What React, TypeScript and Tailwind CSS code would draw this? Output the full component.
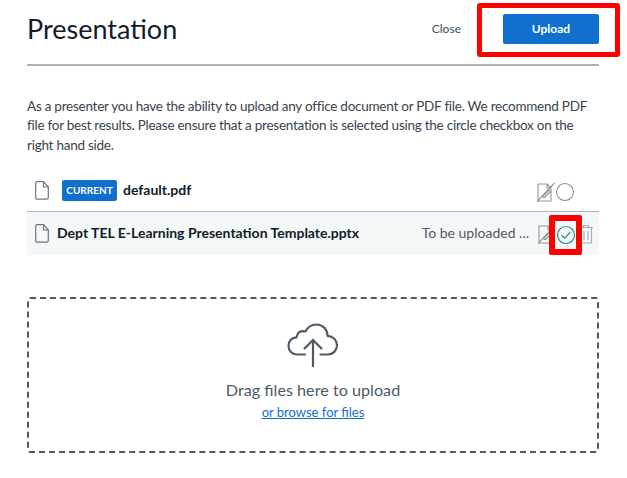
const FileIcon = () => (
  <svg width="14" height="19" viewBox="0 0 14 19" fill="none" stroke="#6b7680" strokeWidth="1.2" strokeLinejoin="round">
    <path d="M2 .7h6.500l4.800 5.300v10.500a1.700 1.700 0 0 1-1.700 1.700H2A1.300 1.300 0 0 1 .7 16.900V2A1.300 1.300 0 0 1 2 .7z" />
    <path d="M8.500 .7V6h4.800" />
  </svg>
);

const NoEditIcon = () => (
  <svg width="18" height="20" viewBox="0 0 18 20" fill="none" stroke="#8b959e" strokeWidth="1.1" strokeLinejoin="round">
    <path d="M1 2h9l4 4v13H1z" />
    <path d="M10 2v4h4" />
    <path d="M0 19.5 17.5 1" />
    <path d="M6 14l6-6 1.5 1.5-6 6H6z" />
  </svg>
);

const EmptyCircle = () => (
  <svg width="20" height="20" viewBox="0 0 20 20" fill="none" stroke="#8b959e" strokeWidth="1.1">
    <circle cx="10" cy="10" r="8.5" />
  </svg>
);

const CheckedCircle = () => (
  <svg width="20" height="20" viewBox="0 0 20 20" fill="none" stroke="#2f8f83" strokeWidth="1.2" strokeLinecap="round" strokeLinejoin="round">
    <circle cx="10" cy="10" r="8.5" />
    <path d="M6 10.5l2.8 2.7L14 7.5" />
  </svg>
);

const TrashIcon = () => (
  <svg width="14" height="20" viewBox="0 0 14 20" fill="none" stroke="#a2abb3" strokeWidth="1.1">
    <path d="M0 3.5h14" />
    <path d="M4.5 3.5V1.5h5v2" />
    <path d="M1.5 3.5V18a1 1 0 0 0 1 1h9a1 1 0 0 0 1-1V3.5" />
    <path d="M5 7v9M9 7v9" />
  </svg>
);

const CloudUpload = () => (
  <svg width="52" height="44" viewBox="0 0 52 44" fill="none" stroke="#4e5a66" strokeWidth="2.2" strokeLinecap="round" strokeLinejoin="round">
    <path d="M18 31.5H10.5C5 31.5 1.5 27.500 1.500 22.800 1.500 18 5 14.500 9.500 14.300 10 9.500 14 7 18.500 8.500 21 3.500 25 1.500 29.500 1.500 36 1.500 40.500 6.500 40.500 12.800 46 13.200 50 17 50 22.300 50 27.500 46 31.500 40.500 31.500H33.500" />
    <path d="M26 43V17" />
    <path d="M17.500 25.500 26 17l8.500 8.500" />
  </svg>
);

export default function App() {
  return (
    <div className="relative w-[627px] h-[478px] overflow-hidden bg-white pl-[27px] pr-[28px] font-['Lato',sans-serif] text-[#1c2733]">
      {/* header */}
      <div className="flex items-center h-[66px] border-b-2 border-[#a7b3bc] pb-[6px]">
        <h1 className="text-[27px] text-[#0f1c2b] flex-1 leading-none -mt-[2px]">Presentation</h1>
        <span className="text-[12px] font-medium text-[#4e5a66] mr-[42px]">Close</span>
        <button className="w-[96px] h-[30px] rounded-[2px] bg-[#1170cf] text-white text-[12px] font-bold">Upload</button>
      </div>

      <p className="mt-[30.500px] text-[13.500px] tracking-[-0.25px] leading-[19.500px] text-[#38434e] w-[572px]">
        As a presenter you have the ability to upload any office document or PDF file. We recommend PDF file for best results. Please ensure that a presentation is selected using the circle checkbox on the right hand side.
      </p>

      {/* file list */}
      <div className="mt-[17px] flex items-center h-[40px] border-b border-[#a7b3bc] pl-[8px] pr-[24px]">
        <span className="flex -mt-[3px]"><FileIcon /></span>
        <span className="ml-[13px] w-[55px] -mt-[3px] justify-center h-[21px] flex items-center rounded-[2px] bg-[#1170cf] text-white text-[10px] font-bold">CURRENT</span>
        <span className="ml-[6px] -mt-[5px] text-[14px] font-bold text-[#0f1c2b] flex-1">default.pdf</span>
        <NoEditIcon />
        <EmptyCircle />
      </div>
      <div className="flex items-center h-[43px] bg-[#f4f8f9] pl-[8px] pr-[6px]">
        <FileIcon />
        <span className="ml-[8px] -mt-[2px] text-[14px] font-bold text-[#0f1c2b] flex-1">Dept TEL E-Learning Presentation Template.pptx</span>
        <span className="text-[14px] -mt-[2px] text-[#4e5a66] mr-[9px]">To be uploaded ...</span>
        <NoEditIcon />
        <span className="flex mt-[3px]"><CheckedCircle /></span>
        <span className="ml-[3px] flex"><TrashIcon /></span>
      </div>

      {/* dropzone */}
      <div className="mt-[42px] h-[156px] border-2 border-dashed border-[#4e5a66] rounded-[3px] flex flex-col items-center pt-[24px]">
        <CloudUpload />
        <div className="mt-[13px] text-[16.200px] leading-[20px] text-[#4e5a66]">Drag files here to upload</div>
        <a className="mt-[3px] text-[13px] leading-[18px] text-[#1170cf] underline">or browse for files</a>
      </div>

      {/* red highlights */}
      <div className="absolute left-[477px] top-[3px] w-[143px] h-[54px] border-[5px] border-[#ff0000] rounded-[3px]" />
      <div className="absolute left-[549px] top-[215px] w-[33px] h-[40px] border-[6px] border-[#ff0000] rounded-[2px]" />
    </div>
  );
}
